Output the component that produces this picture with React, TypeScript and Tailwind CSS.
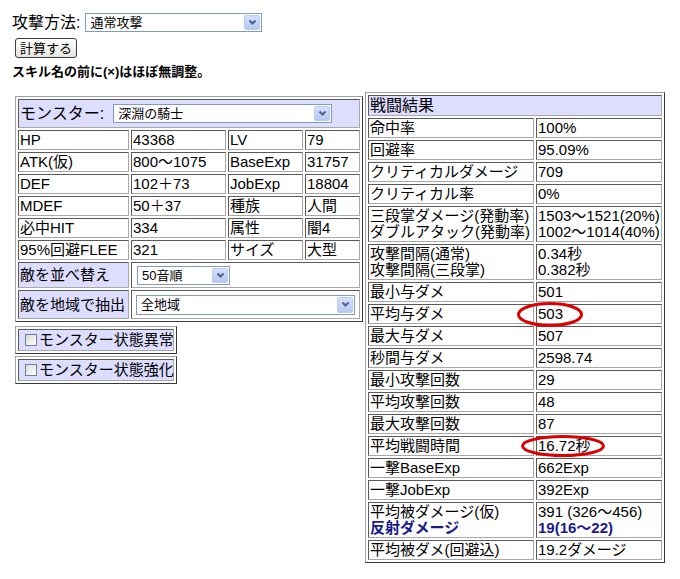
import type { ReactNode } from 'react';

const font = "font-['Liberation_Sans','Noto_Sans_CJK_JP',sans-serif]";

const outerCls =
  'border border-t-[#a0a0a0] border-l-[#a0a0a0] border-b-[#3a3a3a] border-r-[#3a3a3a] p-[2px]';
const cellCls =
  'border border-t-[#5a5a5a] border-l-[#5a5a5a] border-b-[#a8a8a8] border-r-[#a8a8a8] px-[1px] flex items-center whitespace-nowrap text-[15px] leading-[16px]';

function Arrow() {
  return (
    <div className="m-[1px] flex w-[16px] items-center justify-center self-stretch rounded-[2px] border border-[#b9cbf3] bg-gradient-to-b from-[#d4e0fd] to-[#b4c8f5]">
      <svg width="9" height="7" viewBox="0 0 9 7">
        <path d="M1.5 1.5 L4.5 4.5 L7.5 1.5" fill="none" stroke="#4d6185" strokeWidth="2" />
      </svg>
    </div>
  );
}

function XpSelect({ className, text }: { className: string; text: string }) {
  return (
    <div className={`flex items-stretch border border-[#7f9db9] bg-white ${className}`}>
      <span className="flex flex-1 items-center pl-[4px] text-[13px] leading-none">{text}</span>
      <Arrow />
    </div>
  );
}

function Cell({ children, className = '' }: { children?: ReactNode; className?: string }) {
  return <div className={`${cellCls} ${className}`}>{children}</div>;
}

const monsterRows = [
  ['HP', '43368', 'LV', '79'],
  ['ATK(仮)', '800〜1075', 'BaseExp', '31757'],
  ['DEF', '102＋73', 'JobExp', '18804'],
  ['MDEF', '50＋37', '種族', '人間'],
  ['必中HIT', '334', '属性', '闇4'],
  ['95%回避FLEE', '321', 'サイズ', '大型'],
];

const resultRows: { label: ReactNode; value: ReactNode; tall?: boolean }[] = [
  { label: '命中率', value: '100%' },
  { label: '回避率', value: '95.09%' },
  { label: 'クリティカルダメージ', value: '709' },
  { label: 'クリティカル率', value: '0%' },
  {
    label: (
      <>
        三段掌ダメージ(発動率)
        <br />
        ダブルアタック(発動率)
      </>
    ),
    value: (
      <>
        1503〜1521(20%)
        <br />
        1002〜1014(40%)
      </>
    ),
    tall: true,
  },
  {
    label: (
      <>
        攻撃間隔(通常)
        <br />
        攻撃間隔(三段掌)
      </>
    ),
    value: (
      <>
        0.34秒
        <br />
        0.382秒
      </>
    ),
    tall: true,
  },
  { label: '最小与ダメ', value: '501' },
  { label: '平均与ダメ', value: '503' },
  { label: '最大与ダメ', value: '507' },
  { label: '秒間与ダメ', value: '2598.74' },
  { label: '最小攻撃回数', value: '29' },
  { label: '平均攻撃回数', value: '48' },
  { label: '最大攻撃回数', value: '87' },
  { label: '平均戦闘時間', value: '16.72秒' },
  { label: '一撃BaseExp', value: '662Exp' },
  { label: '一撃JobExp', value: '392Exp' },
  {
    label: (
      <>
        平均被ダメージ(仮)
        <br />
        <b className="text-[#1a1a8c]">反射ダメージ</b>
      </>
    ),
    value: (
      <>
        391 (326〜456)
        <br />
        <b className="text-[#1a1a8c]">19(16〜22)</b>
      </>
    ),
    tall: true,
  },
  { label: '平均被ダメ(回避込)', value: '19.2ダメージ' },
];

function StatusBox({ text }: { text: string }) {
  return (
    <div className={`${outerCls} w-[162px]`}>
      <Cell className="h-[22px] bg-[#ddddff] pl-[6px] text-[14.5px]">
        <span className="mr-[2px] inline-block h-[12px] w-[12px] shrink-0 border border-[#6f7f90] bg-gradient-to-br from-[#dcdcd7] to-white" />
        {text}
      </Cell>
    </div>
  );
}

export default function App() {
  return (
    <div className={`relative h-[579px] w-[680px] overflow-hidden bg-white text-black ${font}`}>
      <div className="flex items-center pl-[12px] pt-[13px]">
        <span className="text-[16px] leading-[19px]">攻撃方法:</span>
        <XpSelect className="ml-[5px] h-[19px] w-[177px]" text="通常攻撃" />
      </div>
      <button className="ml-[15px] mt-[6px] flex h-[20px] w-[62px] items-center justify-center rounded-[3px] border border-[#3c3c3c] bg-gradient-to-b from-white to-[#e6e6e0] text-[13px] leading-none">
        計算する
      </button>
      <div className="ml-[12px] mt-[7px] text-[13px] font-bold leading-[13px]">
        スキル名の前に(×)はほぼ無調整。
      </div>

      <div className="mt-[14px] flex items-start">
        <div className="ml-[15px] mt-[4px]">
          <div className={`${outerCls} grid grid-cols-[111px_95px_75px_55px] gap-[2px]`}>
            <Cell className="col-span-4 h-[29px] bg-[#ddddff] text-[16px]">
              モンスター:
              <XpSelect className="ml-[9px] h-[19px] w-[219px]" text="深淵の騎士" />
            </Cell>
            {monsterRows.map((row, i) =>
              row.map((v, j) => (
                <Cell key={`${i}-${j}`} className="h-[20px]">
                  {v}
                </Cell>
              )),
            )}
            <Cell className="h-[26px] bg-[#ddddff]">敵を並べ替え</Cell>
            <Cell className="col-span-3 h-[26px] pl-[5px]">
              <XpSelect className="h-[19px] w-[93px]" text="50音順" />
            </Cell>
            <Cell className="h-[29px] bg-[#ddddff]">敵を地域で抽出</Cell>
            <Cell className="col-span-3 h-[29px] pl-[4px]">
              <XpSelect className="h-[20px] w-[219px]" text="全地域" />
            </Cell>
          </div>
          <div className="mt-[4px]">
            <StatusBox text="モンスター状態異常" />
          </div>
          <div className="mt-[2px]">
            <StatusBox text="モンスター状態強化" />
          </div>
        </div>

        <div className={`${outerCls} ml-[2px] grid w-[300px] grid-cols-[166px_126px] gap-[2px]`}>
          <Cell className="col-span-2 h-[21px] bg-[#ddddff] text-[16px]">戦闘結果</Cell>
          {resultRows.map((r, i) => (
            <div key={i} className="contents">
              <Cell className={r.tall ? 'h-[36px]' : 'h-[20px]'}>
                <span>{r.label}</span>
              </Cell>
              <Cell className={r.tall ? 'h-[36px]' : 'h-[20px]'}>
                <span>{r.value}</span>
              </Cell>
            </div>
          ))}
        </div>
      </div>

      {/* red marks drawn over the result table */}
      <svg className="absolute left-[516px] top-[301px]" width="68" height="27" viewBox="0 0 68 27">
        <ellipse cx="34" cy="13.5" rx="31.5" ry="11" fill="none" stroke="#dc0000" strokeWidth="3" />
      </svg>
      <svg className="absolute left-[520px] top-[434px]" width="86" height="24" viewBox="0 0 86 24">
        <ellipse cx="43" cy="12" rx="40.5" ry="9.5" fill="none" stroke="#dc0000" strokeWidth="3" />
      </svg>
    </div>
  );
}
